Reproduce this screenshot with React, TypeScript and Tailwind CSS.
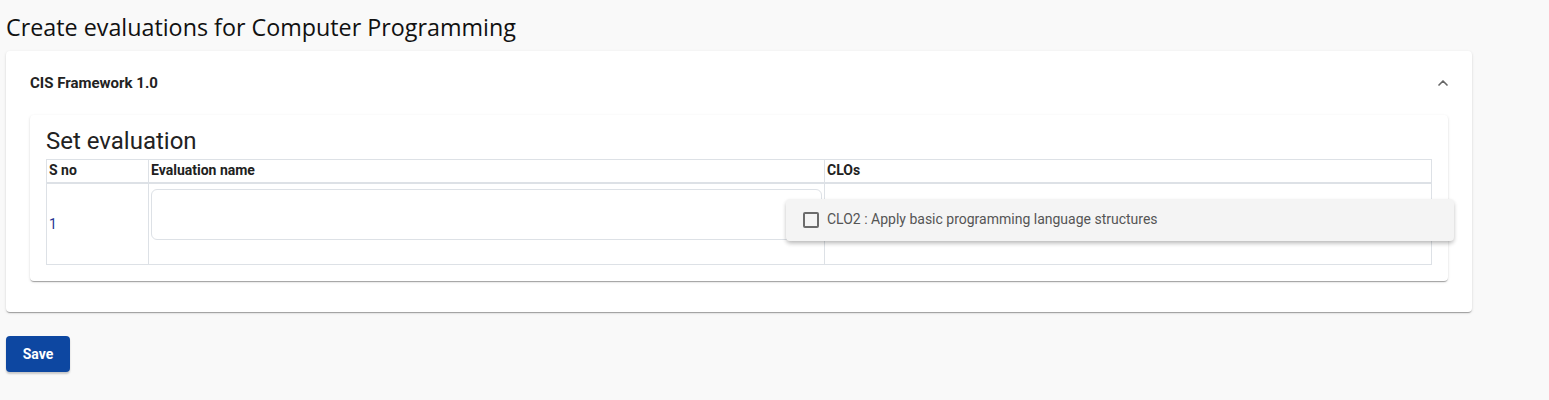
import { ChevronUp } from 'lucide-react';

export default function App() {
  return (
    <div className="min-h-[400px] w-full bg-[#f9f9f9] px-[6px] pt-[12px] font-['Roboto',sans-serif] text-[#212121]">
      <h1 className="font-['Open_Sans',sans-serif] text-[23.3px] leading-[30px] text-[#111]">Create evaluations for Computer Programming</h1>

      {/* Accordion */}
      <div className="mt-[9px] w-[1466px] rounded-[4px] bg-white shadow-[0_2px_1px_-1px_rgba(0,0,0,0.2),0_1px_1px_0_rgba(0,0,0,0.14),0_1px_3px_0_rgba(0,0,0,0.12)]">
        <div className="flex h-[64px] items-center justify-between pl-[24px] pr-[21px]">
          <span className="text-[15px] font-bold text-[#222]">CIS Framework 1.0</span>
          <ChevronUp className="h-[16px] w-[16px] text-[#666]" strokeWidth={2.5} />
        </div>

        <div className="px-[24px] pb-[31px]">
          <div className="rounded-[4px] bg-white px-[16px] pb-[16px] pt-[10px] shadow-[0_2px_1px_-1px_rgba(0,0,0,0.2),0_1px_1px_0_rgba(0,0,0,0.14),0_1px_3px_0_rgba(0,0,0,0.12)]">
            <h2 className="text-[24px] leading-[32px] text-[#222]">Set evaluation</h2>
            <table className="mt-[2px] w-full border-collapse text-[14px]">
              <thead>
                <tr className="h-[23px] border-b-2 border-[#dde1e6]">
                  <th className="w-[102px] border border-[#dde1e6] px-[2px] text-left font-bold">S no</th>
                  <th className="w-[676px] border border-[#dde1e6] px-[2px] text-left font-bold">Evaluation name</th>
                  <th className="border border-[#dde1e6] px-[2px] text-left font-bold">CLOs</th>
                </tr>
              </thead>
              <tbody>
                <tr className="h-[82px]">
                  <td className="border border-[#dde1e6] px-[2px] pt-[1px] text-[#283593]">1</td>
                  <td className="border border-[#dde1e6] px-[2px] pt-[5px] align-top">
                    <div className="h-[51px] w-full rounded-[6px] border border-[#dde1e6]" />
                  </td>
                  <td className="relative border border-[#dde1e6]">
                    <div className="absolute left-[-39px] top-[15px] flex h-[42px] w-[668px] items-center gap-[8px] rounded-[4px] bg-[#f4f4f4] pl-[17px] shadow-[0_3px_5px_-1px_rgba(0,0,0,0.2),0_2px_4px_0_rgba(0,0,0,0.12)]">
                      <span className="h-[16px] w-[16px] rounded-[2px] border-2 border-[#6b6b6b]" />
                      <span className="text-[14px] text-[#555]">CLO2 : Apply basic programming language structures</span>
                    </div>
                  </td>
                </tr>
              </tbody>
            </table>
          </div>
        </div>
      </div>

      <button className="mt-[24px] h-[36px] w-[64px] rounded-[4px] bg-[#0d47a1] text-[14px] font-bold text-white shadow-[0_2px_2px_rgba(0,0,0,0.2)]">Save</button>
    </div>
  );
}
